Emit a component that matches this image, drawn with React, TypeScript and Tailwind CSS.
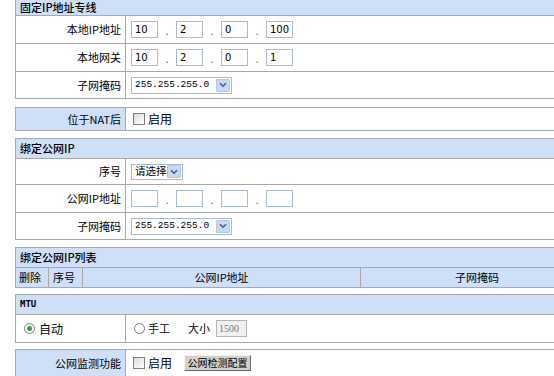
import React from "react";

const CJK = { fontFamily: '"Noto Sans CJK SC", "Noto Sans", sans-serif' };
const B = "border-[#a9a9a9]";

function IpInput({ v }: { v: string }) {
  return (
    <div
      className="w-[27px] h-[17px] border border-[#a9bccf] bg-white flex items-center pl-[3px] text-[10px] text-black leading-none"
      style={{ fontFamily: '"DejaVu Sans", sans-serif' }}
    >
      {v}
    </div>
  );
}

function IpGroup({ vals }: { vals: string[] }) {
  return (
    <div className="flex items-center">
      {vals.map((v, i) => (
        <React.Fragment key={i}>
          {i > 0 && (
            <div className="w-[18px] text-center text-[10px] text-[#555] leading-none pt-[3px]">.</div>
          )}
          <IpInput v={v} />
        </React.Fragment>
      ))}
    </div>
  );
}

function Arrow() {
  return (
    <div className="w-[14px] h-[13px] shrink-0 bg-[#c9d9f1] border border-[#b5c8e6] flex items-center justify-center rounded-[1px]">
      <svg width="8" height="6" viewBox="0 0 8 6">
        <path d="M1 1.2 L4 4.2 L7 1.2" fill="none" stroke="#3d5e9c" strokeWidth="1.6" />
      </svg>
    </div>
  );
}

function MaskSelect() {
  return (
    <div className="w-[101px] h-[17px] border border-[#a9bccf] bg-white flex items-center justify-between pl-[3px] pr-[1px]">
      <span className="text-[9.5px] text-black leading-none whitespace-nowrap" style={{ fontFamily: '"Liberation Mono", monospace' }}>
        255.255.255.0
      </span>
      <Arrow />
    </div>
  );
}

function Checkbox() {
  return (
    <div className="w-[12px] h-[12px] shrink-0 border border-[#7f7f7f] bg-gradient-to-br from-[#dcdcdc] to-[#ffffff]" />
  );
}

function Radio({ on }: { on?: boolean }) {
  return (
    <div className="w-[11px] h-[11px] shrink-0 rounded-full border border-[#6f7f94] bg-white flex items-center justify-center">
      {on && <div className="w-[5px] h-[5px] rounded-full bg-[#3aa53a]" />}
    </div>
  );
}

function Label({ text, blue, h }: { text: string; blue?: boolean; h: string }) {
  return (
    <div
      className={`w-[110px] shrink-0 border-r ${B} flex items-center justify-end pr-[4px] text-[11px] text-black whitespace-nowrap ${blue ? "bg-[#cfdff7]" : "bg-white"} ${h}`}
      style={CJK}
    >
      {text}
    </div>
  );
}

function Row({ label, blue, h, children }: { label: string; blue?: boolean; h: string; children?: React.ReactNode }) {
  return (
    <div className={`flex border-b ${B} ${h}`}>
      <Label text={label} blue={blue} h="h-full" />
      <div className="flex-1 flex items-center pl-[5px]">{children}</div>
    </div>
  );
}

function Header({ text, h = "h-[20px]", mono }: { text: string; h?: string; mono?: boolean }) {
  return (
    <div
      className={`bg-[#cfdff7] border-b ${B} flex items-center pl-[4px] text-[11px] text-black font-medium whitespace-nowrap ${h}`}
      style={mono ? { fontFamily: '"DejaVu Sans Mono", monospace', fontWeight: 700, fontSize: 9 } : CJK}
    >
      {text}
    </div>
  );
}

function Table({ children, cls = "" }: { children: React.ReactNode; cls?: string }) {
  return <div className={`border-l border-t border-r ${B} ${cls}`}>{children}</div>;
}

function Enable() {
  return (
    <div className="flex items-center gap-[3px]">
      <Checkbox />
      <span className="text-[12px] text-black whitespace-nowrap" style={CJK}>启用</span>
    </div>
  );
}

export default function App() {
  return (
    <div className="w-[554px] h-[376px] overflow-hidden bg-white relative">
      <div className="ml-[15px] w-[579px]">
        <Table cls="-mt-px">
          <Header text="固定IP地址专线" h="h-[16px]" />
          <Row label="本地IP地址" h="h-[28px]">
            <IpGroup vals={["10", "2", "0", "100"]} />
          </Row>
          <Row label="本地网关" h="h-[28px]">
            <IpGroup vals={["10", "2", "0", "1"]} />
          </Row>
          <Row label="子网掩码" h="h-[27px]">
            <MaskSelect />
          </Row>
        </Table>

        <Table cls="mt-[8px]">
          <Row label="位于NAT后" blue h="h-[23px]">
            <div className="pl-[2px]"><Enable /></div>
          </Row>
        </Table>

        <Table cls="mt-[7px]">
          <Header text="绑定公网IP" />
          <Row label="序号" h="h-[26px]">
            <div className="w-[52px] h-[16px] border border-[#a9bccf] bg-white flex items-center justify-between pl-[3px] pr-[1px]">
              <span className="text-[10.5px] text-black leading-none whitespace-nowrap" style={CJK}>请选择</span>
              <Arrow />
            </div>
          </Row>
          <Row label="公网IP地址" h="h-[28px]">
            <IpGroup vals={["", "", "", ""]} />
          </Row>
          <Row label="子网掩码" h="h-[27px]">
            <MaskSelect />
          </Row>
        </Table>

        <Table cls="mt-[7px]">
          <Header text="绑定公网IP列表" />
          <div className={`flex h-[20px] border-b ${B} bg-[#cfdff7] text-[11px] text-black whitespace-nowrap`} style={CJK}>
            <div className={`w-[33px] border-r ${B} flex items-center pl-[3px]`}>删除</div>
            <div className={`w-[34px] border-r ${B} flex items-center pl-[4px]`}>序号</div>
            <div className={`w-[278px] border-r ${B} flex items-center justify-center`}>公网IP地址</div>
            <div className="flex-1 flex items-center justify-center">子网掩码</div>
          </div>
        </Table>

        <Table cls="mt-[6px]">
          <Header text="MTU" mono />
          <div className={`flex h-[28px] border-b ${B}`}>
            <div className={`w-[110px] border-r ${B} flex items-center pl-[8px] gap-[4px]`}>
              <Radio on />
              <span className="text-[12px] text-black whitespace-nowrap" style={CJK}>自动</span>
            </div>
            <div className="flex-1 flex items-center pl-[8px]">
              <Radio />
              <span className="ml-[3px] text-[11px] text-black whitespace-nowrap" style={CJK}>手工</span>
              <span className="ml-[18px] text-[11px] text-black whitespace-nowrap" style={CJK}>大小</span>
              <div
                className="ml-[6px] w-[31px] h-[17px] border border-[#b4b4b4] bg-[#f0f0f0] flex items-center pl-[2px] text-[10px] text-[#777] leading-none"
                style={{ fontFamily: '"Liberation Serif", serif' }}
              >
                1500
              </div>
            </div>
          </div>
        </Table>

        <Table cls="mt-[6px]">
          <Row label="公网监测功能" blue h="h-[27px]">
            <div className="pl-[2px] flex items-center">
              <Enable />
              <div
                className="ml-[12px] w-[67px] h-[16px] shrink-0 bg-[#d4d0c8] border border-t-[#f4f4f4] border-l-[#f4f4f4] border-r-[#6b6b6b] border-b-[#6b6b6b] flex items-center justify-center text-[10px] text-black leading-none whitespace-nowrap"
                style={CJK}
              >
                公网检测配置
              </div>
            </div>
          </Row>
        </Table>
      </div>
    </div>
  );
}
